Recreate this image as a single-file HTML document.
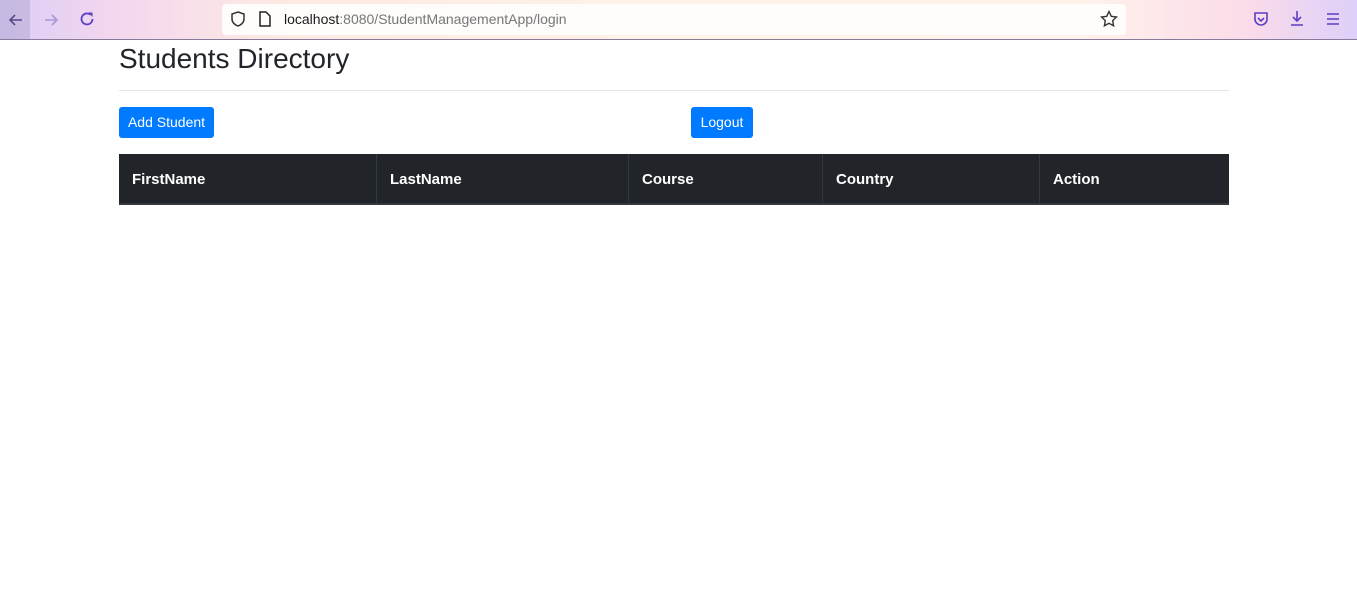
<!DOCTYPE html>
<html><head><meta charset="utf-8"><style>
*{margin:0;padding:0;box-sizing:border-box}
body{width:1357px;height:606px;background:#fff;font-family:"Liberation Sans",sans-serif;position:relative;overflow:hidden;color:#212529}
.tb{position:absolute;left:0;top:0;width:1357px;height:40px;background:linear-gradient(90deg,#d9cdf7 0%,#f3d6ef 8%,#fde9e3 20%,#fff3e8 50%,#fff2ea 80%,#fbdbe9 92%,#ddd0fa 100%);border-bottom:1px solid #8a7a9a}
.url{position:absolute;left:222px;top:4px;width:904px;height:31px;background:#fffdfb;border-radius:4px}
.a{position:absolute}
.title{position:absolute;left:119px;top:40px;font-size:28px;font-weight:300;line-height:38px}
.hr{position:absolute;left:119px;top:90px;width:1110px;height:1px;background:#e3e3e3}
.btn{position:absolute;top:107px;height:31px;background:#007bff;color:#fff;font-size:14px;line-height:31px;text-align:center;border-radius:3px}
.th{position:absolute;top:154px;height:51px;background:#212529;border-bottom:2px solid #32383e;color:#fff;font-weight:bold;font-size:15px;line-height:51px;padding-left:13px;border-right:1px solid #32383e}
</style></head><body>
<div class="tb">
<div class="a" style="left:0;top:0;width:30px;height:39px;background:rgba(160,150,190,.35)"></div>
<svg class="a" style="left:6px;top:10px" width="20" height="20" viewBox="0 0 20 20"><path d="M16 10H4M9 5L4 10l5 5" stroke="#5b4b8a" stroke-width="1.6" fill="none"/></svg>
<svg class="a" style="left:41px;top:10px" width="20" height="20" viewBox="0 0 20 20"><path d="M4 10h12M11 5l5 5-5 5" stroke="#a995d8" stroke-width="1.6" fill="none"/></svg>
<svg class="a" style="left:77px;top:9px" width="20" height="20" viewBox="0 0 20 20"><path d="M15.5 10a5.5 5.5 0 1 1-2-4.3" stroke="#5b3fc4" stroke-width="1.8" fill="none"/><path d="M11 3.5h4.5V8z" fill="#5b3fc4"/></svg>
<div class="url">
<svg class="a" style="left:7px;top:6px" width="18" height="18" viewBox="0 0 18 18"><path d="M9 2l6 2v5c0 3.5-3 6-6 7-3-1-6-3.5-6-7V4z" stroke="#333" stroke-width="1.5" fill="none"/></svg>
<svg class="a" style="left:36px;top:7px" width="14" height="16" viewBox="0 0 14 16"><path d="M2 1h6l4 4v10H2z" stroke="#222" stroke-width="1.5" fill="none"/></svg>
<div class="a" style="left:62px;top:7px;font-size:14px;color:#1a1a1a">localhost<span style="color:#777">:8080/StudentManagementApp/login</span></div>
<svg class="a" style="left:878px;top:6px" width="18" height="18" viewBox="0 0 18 18"><path d="M9 1.5l2.3 4.8 5.2.7-3.8 3.6.9 5.2L9 13.3 4.4 15.8l.9-5.2L1.5 7l5.2-.7z" stroke="#333" stroke-width="1.4" fill="none"/></svg>
</div>
<svg class="a" style="left:1252px;top:10px" width="18" height="18" viewBox="0 0 18 18"><path d="M3 3h12v6a6 6 0 0 1-12 0z" stroke="#5b3fc4" stroke-width="1.6" fill="none"/><path d="M6 8l3 3 3-3" stroke="#5b3fc4" stroke-width="1.6" fill="none"/></svg>
<svg class="a" style="left:1288px;top:9px" width="18" height="18" viewBox="0 0 18 18"><path d="M9 2v10M5 8l4 4 4-4M3 16h12" stroke="#5b3fc4" stroke-width="1.6" fill="none"/></svg>
<svg class="a" style="left:1325px;top:11px" width="16" height="16" viewBox="0 0 16 16"><path d="M2 3h12M2 8h12M2 13h12" stroke="#5b3fc4" stroke-width="1.6"/></svg>
</div>
<div class="title">Students Directory</div>
<div class="hr"></div>
<div class="btn" style="left:119px;width:95px">Add Student</div>
<div class="btn" style="left:691px;width:62px">Logout</div>
<div class="th" style="left:119px;width:258px">FirstName</div>
<div class="th" style="left:377px;width:252px">LastName</div>
<div class="th" style="left:629px;width:194px">Course</div>
<div class="th" style="left:823px;width:217px">Country</div>
<div class="th" style="left:1040px;width:189px;border-right:none">Action</div>
</body></html>
